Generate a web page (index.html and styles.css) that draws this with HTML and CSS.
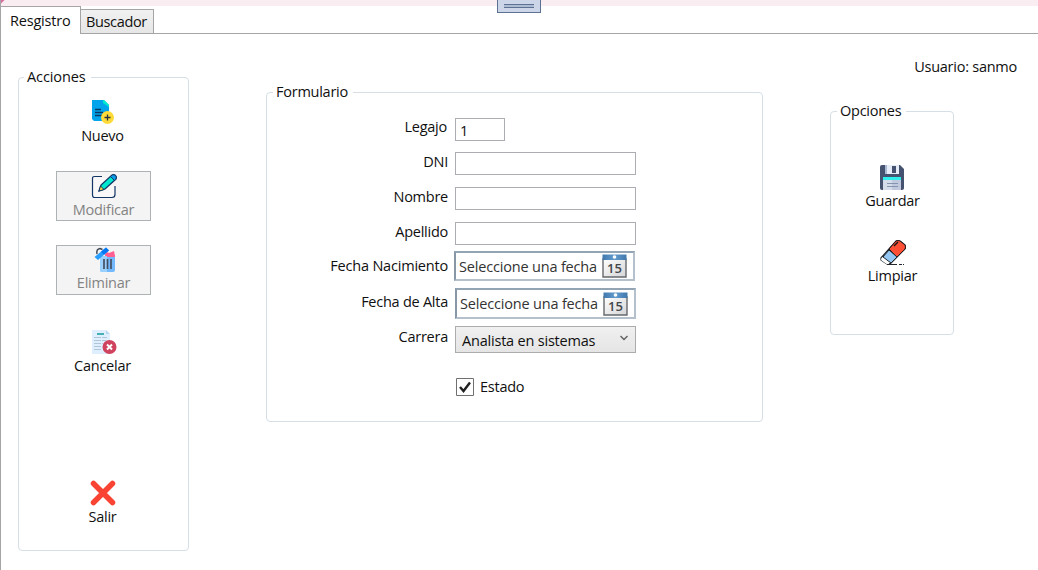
FILE: index.html
```html
<!DOCTYPE html>
<html lang="es">
<head>
<meta charset="utf-8">
<title>Registro</title>
<link rel="stylesheet" href="styles.css">
</head>
<body>
<div class="window">
  <div class="titlebar"></div>
  <div class="handle"><span></span></div>
  <nav class="tabs">
    <div class="tab active">Resgistro</div>
    <div class="tab">Buscador</div>
  </nav>
  <main class="page">
    <fieldset class="group actions">
      <legend>Acciones</legend>
      <div class="action nuevo">
        <svg width="28" height="28" viewBox="0 0 28 28"><path d="M3 3h12l5 5v16H5l-2-2z" fill="#00a4ea"/><path d="M14 3h1l5 5v2l-6-4z" fill="#00eccc"/><path d="M6 12.500h6M6 15.500h8M6 18.500h7" stroke="#083863" stroke-width="1.300"/><circle cx="18.500" cy="20.500" r="6.500" fill="#ffdb3a"/><path d="M18.500 17.500v6M15.500 20.500h6" stroke="#26313f" stroke-width="1.300"/></svg>
        <span>Nuevo</span>
      </div>
      <div class="action boxed modificar">
        <svg width="28" height="28" viewBox="0 0 28 28"><path d="M12 4.500H4.500q-2 0-2 2V23q0 2.500 2 2.500H22q3 0 3-3V14" fill="#f8f8f8" stroke="#123665" stroke-width="1.200"/><path d="M9 19l2-6L22 3q2-1 3.500.5t.5 3.500L15 17z" fill="#00e9cf" stroke="#123665" stroke-width="1.300"/><path d="M20.500 4.500L22 3q2-1 3.500.5t.5 3.500l-1.500 1.500z" fill="#0b9ae5" stroke="#123665"/><path d="M9 19l1.500-5 3.500 3.500z" fill="#ffd83d" stroke="#123665"/></svg>
        <span>Modificar</span>
      </div>
      <div class="action boxed eliminar">
        <svg width="28" height="28" viewBox="0 0 28 28"><path d="M15 8l2-2 2 1 5-2 1 5H15z" fill="#ff5f91"/><path d="M10 10h15v14q0 2-2 2H12q-2 0-2-2z" fill="#72b9ff"/><path d="M10 10h7v16h-5q-2 0-2-2z" fill="#9bd1ff"/><path d="M17 9h8v2h-8z" fill="#ff5f91"/><path d="M14 13v10M17.500 13v10M21 13v10" stroke="#465063" stroke-width="1.700"/><path d="M4.500 11L16 1.500l3 3L8 14z" fill="#299eff"/><path d="M11 5.700l5-4.200 3 3-5 4.200z" fill="#0576f4"/><path d="M7 8q-1-5 3-5.500l2.500 1" fill="none" stroke="#414956" stroke-width="1.500"/></svg>
        <span>Eliminar</span>
      </div>
      <div class="action cancelar">
        <svg width="28" height="28" viewBox="0 0 28 28"><path d="M3 3h14l4 4v20H3z" fill="#e0efff"/><path d="M17 3l4 4h-4z" fill="#b8d6ed"/><path d="M8 7h7" stroke="#45afb4" stroke-width="2"/><path d="M5 10.500h13M5 13.500h12M5 16.500h9M5 19.500h7M5 22.500h7" stroke="#b0c5d5" stroke-dasharray="7 1"/><circle cx="20.500" cy="20" r="7" fill="#cf435e"/><path d="M18 17.500l5 5m0-5l-5 5" stroke="#fff" stroke-width="2"/></svg>
        <span>Cancelar</span>
      </div>
      <div class="action salir">
        <svg width="28" height="28" viewBox="0 0 28 28"><path d="M4.500 5.500l19 19M23.500 5.500l-19 19" stroke="#f94434" stroke-width="5.500" stroke-linecap="round"/></svg>
        <span>Salir</span>
      </div>
    </fieldset>

    <fieldset class="group form">
      <legend>Formulario</legend>
      <div class="row legajo"><label>Legajo</label><div class="input short">1</div></div>
      <div class="row dni"><label>DNI</label><div class="input"></div></div>
      <div class="row nombre"><label>Nombre</label><div class="input"></div></div>
      <div class="row apellido"><label>Apellido</label><div class="input"></div></div>
      <div class="row nacimiento"><label>Fecha Nacimiento</label>
        <div class="date"><span>Seleccione una fecha</span>
          <svg width="25" height="24" viewBox="0 0 25 24"><defs><linearGradient id="g" x2="1" y2="1"><stop stop-color="#fff"/><stop offset="1" stop-color="#d5d5d7"/></linearGradient><linearGradient id="b" x2="1"><stop stop-color="#4279ad"/><stop offset=".5" stop-color="#629bcd"/><stop offset="1" stop-color="#4279ad"/></linearGradient></defs><path d="M1 5h23v18H1z" fill="url(#g)" stroke="#66696d" stroke-width="1.400"/><path d="M.5.500h24V6H.5z" fill="url(#b)"/><circle cx="12.500" cy="3" r="1.800" fill="#fff"/><text class="day" x="12.500" y="19">15</text></svg>
        </div></div>
      <div class="row alta"><label>Fecha de Alta</label>
        <div class="date"><span>Seleccione una fecha</span>
          <svg width="25" height="24" viewBox="0 0 25 24"><path d="M1 5h23v18H1z" fill="url(#g)" stroke="#66696d" stroke-width="1.400"/><path d="M.5.500h24V6H.5z" fill="url(#b)"/><circle cx="12.500" cy="3" r="1.800" fill="#fff"/><text class="day" x="12.500" y="19">15</text></svg>
        </div></div>
      <div class="row carrera"><label>Carrera</label>
        <div class="select"><span>Analista en sistemas</span><svg width="10" height="8" viewBox="0 0 10 8"><path d="M1.500 1L5 4.500 8.500 1" fill="none" stroke="#606060" stroke-width="1.400"/></svg></div></div>
      <div class="check"><svg width="18" height="18" viewBox="0 0 18 18"><path d="M.5.500h17v17H.5z" fill="#fff" stroke="#707070"/><path d="M4 9l3.500 4L14 4.500" fill="none" stroke="#212121" stroke-width="2.400"/></svg><span>Estado</span></div>
    </fieldset>

    <aside class="side">
      <div class="user">Usuario: sanmo</div>
      <fieldset class="group options">
        <legend>Opciones</legend>
        <div class="action guardar">
          <svg width="28" height="28" viewBox="0 0 28 28"><path d="M2 4q0-2 2-2h18l4 4v19q0 2-2 2H4q-2 0-2-2z" fill="#465370"/><path d="M7 2h14v9H7z" fill="#e6edf8"/><path d="M7 2h2v9H7z" fill="#a9b9d2"/><path d="M14 3h4v7h-4z" fill="#465370"/><path d="M5 14h18v13H5z" fill="#d5dcea"/><path d="M14 14h9v13h-9z" fill="#c0c9de"/><path d="M5 14h18v3H5z" fill="#30f0ef"/><path d="M9 20.500h11M9 23.500h11" stroke="#8794ae" stroke-width="1.200"/></svg>
          <span>Guardar</span>
        </div>
        <div class="action limpiar">
          <svg width="28" height="28" viewBox="0 0 28 28"><path d="M3 20L18 3q2-1 4 0l5 4q1 2 0 4L13 25q-2 2-4 1l-6-4z" fill="#fff" stroke="#171b20" stroke-width="1.200"/><path d="M11 11l7-8q2-1 4 0l5 4q1 2 0 4l-8 8z" fill="#ff5035" stroke="#27191c"/><path d="M5 19l6-7 8 7-6 6z" fill="#94c7f3" stroke="#20252c"/><path d="M4 19l7 6-1 2-7-5z" fill="#fff"/><path d="M16 8l4-4" stroke="#191919" stroke-width="1.500"/><path d="M9 26.500h10m2 0h3m1 0h1" stroke="#22252b"/></svg>
          <span>Limpiar</span>
        </div>
      </fieldset>
    </aside>
  </main>
</div>
</body>
</html>
```
FILE: styles.css
```css
* { box-sizing: border-box; }
body { margin: 0; background: #fff; }
svg { display: block; flex: none; }
.window {
  position: relative; width: 1038px; height: 570px; overflow: hidden;
  border-left: 1px solid #a5a5a5; background: #fff;
  font: 14.5px/20px "Open Sans", "Noto Sans", sans-serif; letter-spacing: -.25px; color: #101010;
}
.titlebar { height: 6px; background: linear-gradient(135deg, #d66f9f 2px, #f9edf2 3px); }
.handle {
  position: absolute; left: 496px; top: 0; width: 44px; height: 13px; padding: 4px 6px;
  background: #cdd5e9; border: 1px solid #5d7292; border-top: 0;
}
.handle span { display: block; height: 4px; border: solid #5d7292; border-width: 1px 0; background: #aebbd5; }
.tabs { display: flex; align-items: flex-end; height: 28px; border-bottom: 1px solid #a5a5a5; }
.tab {
  height: 25px; width: 74px; padding: 2px 0 0 5px; border: 1px solid #a5a5a5; border-left: 0;
  background: linear-gradient(#f1f1f1, #e6e6e6); letter-spacing: -.35px; margin-bottom: -1px;
}
.tab + .tab { width: 73px; }
.tab.active { width: 80px; height: 28px; padding: 4px 0 0 9px; letter-spacing: -.2px; border-bottom: 0; background: #fff; }
.page { display: flex; align-items: flex-start; height: 536px; }
.group { min-width: 0; margin: 0; padding: 0; border: 1px solid #d5dfe5; border-radius: 4px; }
.group legend { margin-left: 6px; padding: 0 5px 0 3px; }
.actions legend { margin-left: 5px; letter-spacing: -.1px; }
.actions { width: 171px; height: 484px; margin: 33px 0 0 17px; }
.action {
  display: flex; flex-direction: column; align-items: center; width: 95px; height: 50px;
  margin-left: 37px; line-height: 20px;
}
.action svg { margin-bottom: 1px; }
.actions .action:not(.boxed) { padding-right: 2px; }
.boxed { border: 1px solid #adb2b5; background: #f4f4f4; color: #838383; }
.boxed svg { margin-bottom: 0; }
.eliminar svg { margin-bottom: -1px; }
.nuevo { margin-top: 10px; }
.modificar, .eliminar { margin-top: 24px; }
.cancelar { margin-top: 32px; }
.salir { margin-top: 101px; }
.form { width: 497px; height: 340px; margin: 48px 0 0 77px; }
.row { display: flex; align-items: center; margin-left: 43px; }
.row label { width: 138px; margin-right: 7px; text-align: right; position: relative; top: -2px; }
.input { width: 181px; height: 23px; border: 1px solid #abadb3; padding: 2px 0 0 4px; }
.input.short { width: 50px; }
.legajo { margin-top: 16px; }
.legajo label { top: -3px; left: -1px; }
.dni { margin-top: 11px; }
.nombre, .apellido { margin-top: 12px; }
.nacimiento { margin-top: 6px; margin-left: 42px; }
.nacimiento label { top: 0; left: 1px; letter-spacing: -.2px; }
.alta, .carrera { margin-top: 7px; }
.carrera label { top: -3px; }
.date {
  display: flex; align-items: center; justify-content: space-between; width: 181px; height: 30px;
  padding: 0 6px 0 3px; border: 2px solid #b4c0cb; border-top-color: #93a4b4; border-left-color: #8797a8; color: #333;
  letter-spacing: -.18px;
}
.date span { margin-top: 1px; }
.alta .date { height: 31px; }
.day { font: 600 13px "Open Sans", sans-serif; text-anchor: middle; fill: #44484c; letter-spacing: 0; }
.select {
  display: flex; align-items: center; justify-content: space-between; width: 181px; height: 27px;
  padding: 2px 6px 0 6px; border: 1px solid #acacac; background: linear-gradient(#f0f0f0, #e5e5e5);
  letter-spacing: -.2px;
}
.select svg { margin-top: -3px; }
.check { display: flex; align-items: center; gap: 6px; margin: 24px 0 0 189px; }
.side { display: flex; flex-direction: column; margin: 23px 0 0 67px; width: 189px; }
.user { align-self: flex-end; margin-right: 2px; }
.options { width: 124px; height: 234px; margin-top: 24px; }
.options .action { margin-left: 14px; }
.options .action svg { margin-right: 1px; margin-bottom: 0; }
.guardar { margin-top: 42px; }
.limpiar { margin-top: 25px; }
```
